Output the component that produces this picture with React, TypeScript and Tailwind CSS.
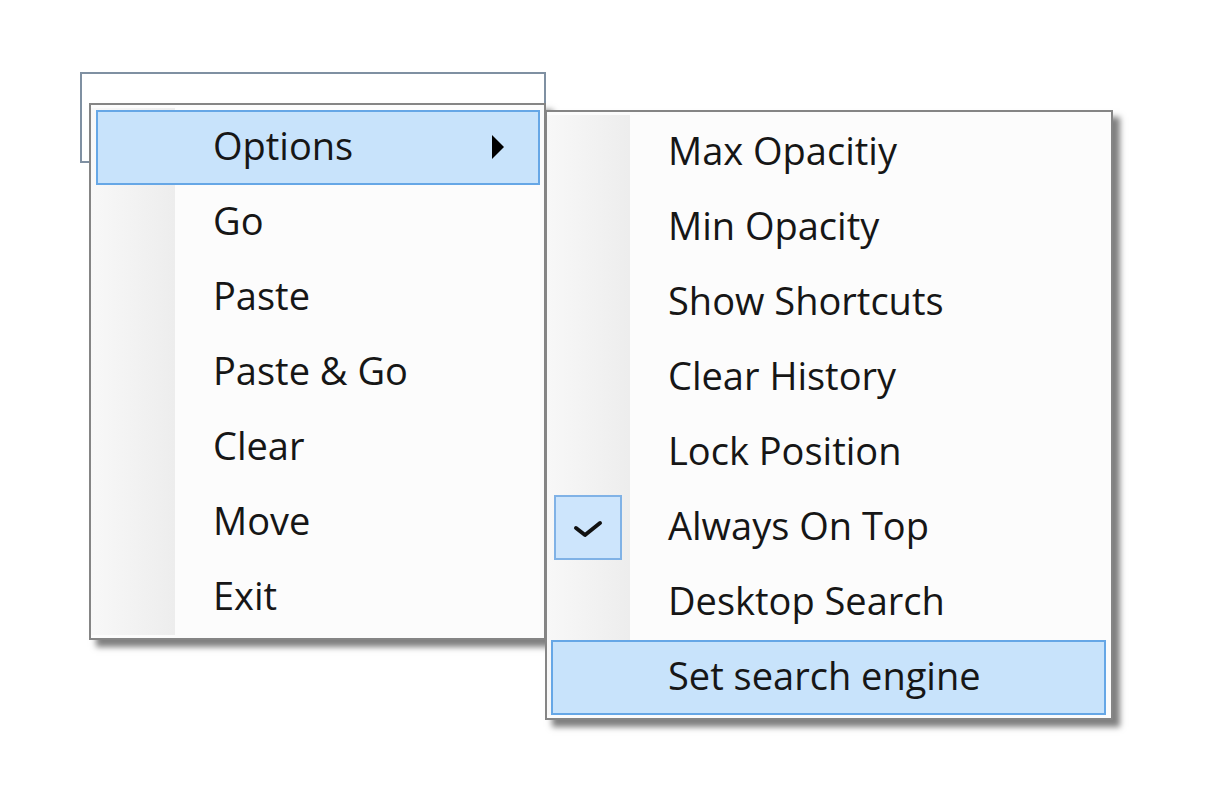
import React from "react";

type Item = {
  label: string;
  active?: boolean;
  submenu?: boolean;
  checked?: boolean;
};

const mainItems: Item[] = [
  { label: "Options", active: true, submenu: true },
  { label: "Go" },
  { label: "Paste" },
  { label: "Paste & Go" },
  { label: "Clear" },
  { label: "Move" },
  { label: "Exit" },
];

const optionItems: Item[] = [
  { label: "Max Opacitiy" },
  { label: "Min Opacity" },
  { label: "Show Shortcuts" },
  { label: "Clear History" },
  { label: "Lock Position" },
  { label: "Always On Top", checked: true },
  { label: "Desktop Search" },
  { label: "Set search engine", active: true },
];

function Row({ item }: { item: Item }) {
  return (
    <div
      className={
        "h-[75px] border-2 flex items-center pl-[1px] " +
        (item.active ? "border-[#66a7e6] bg-[#c8e3fb]" : "border-transparent")
      }
    >
      {/* icon / check slot in the gutter */}
      <div
        className={
          "w-[68px] h-[65px] shrink-0 flex items-center justify-center " +
          (item.checked ? "border-2 border-[#80b2e6] bg-[#cde5fc]" : "")
        }
      >
        {item.checked && (
          <svg width="30" height="18" viewBox="0 0 30 18" className="block mt-[2px]">
            <path
              d="M3 8 L12 15 L27 3"
              fill="none"
              stroke="#111"
              strokeWidth="4"
              strokeLinecap="round"
              strokeLinejoin="round"
            />
          </svg>
        )}
      </div>
      <span className="ml-[46px] text-[38px] leading-[71px] pb-[4px] text-[#161616] whitespace-nowrap">
        {item.label}
      </span>
      {item.submenu && (
        <svg width="13" height="24" viewBox="0 0 13 24" className="ml-auto mr-[33px] mb-[1px] block">
          <polygon points="0,0 0,24 12,12" fill="#000" />
        </svg>
      )}
    </div>
  );
}

function Menu({
  items,
  className,
  gutter,
}: {
  items: Item[];
  className: string;
  gutter: string;
}) {
  return (
    <div
      className={
        "absolute border-2 border-[#858585] bg-[#fcfcfc] shadow-[7px_7px_6px_rgba(0,0,0,0.5)] " +
        className
      }
    >
      <div
        className={
          "absolute left-0 top-[3px] bottom-[3px] bg-gradient-to-r from-[#f8f8f8] to-[#ededed] " +
          gutter
        }
      />
      <div className="relative flex flex-col">
        {items.map((it) => (
          <Row key={it.label} item={it} />
        ))}
      </div>
    </div>
  );
}

export default function App() {
  return (
    <div
      className="relative w-[1207px] h-[800px] bg-white overflow-hidden"
      style={{ fontFamily: "'Open Sans', 'Noto Sans', sans-serif" }}
    >
      {/* the search box the menu was opened from */}
      <div className="ml-[80px] mt-[72px] w-[466px] h-[91px] border-2 border-[#7f90a2] bg-white" />

      {/* context menu */}
      <Menu
        items={mainItems}
        className="left-[89px] top-[103px] w-[457px] pl-[5px] pr-[4px] pt-[5px] pb-[3px]"
        gutter="w-[84px]"
      />

      {/* Options submenu */}
      <Menu
        items={optionItems}
        className="left-[545px] top-[110px] w-[568px] pl-[4px] pr-[5px] pt-[3px] pb-[3px]"
        gutter="w-[83px]"
      />
    </div>
  );
}
